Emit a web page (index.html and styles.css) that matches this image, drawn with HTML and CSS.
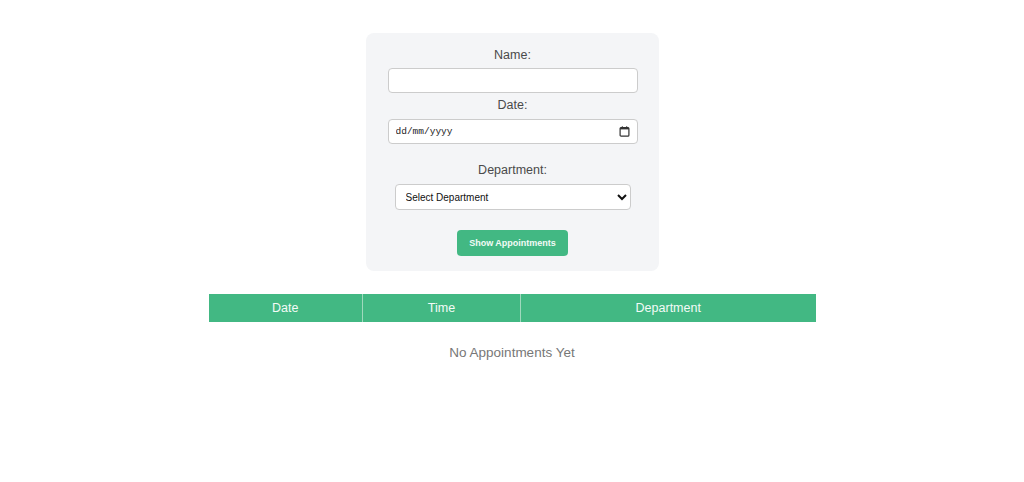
FILE: index.html
```html
<!DOCTYPE html>
<html lang="en-GB">
<head>
  <meta charset="UTF-8" />
  <meta name="viewport" content="width=device-width, initial-scale=1" />
  <title>Appointments</title>
  <link rel="stylesheet" href="styles.css">
</head>
<body>
  <div class="form-box">
    <label for="name" class="label-name">Name:</label>
    <input type="text" id="name" class="field" />

    <label for="date" class="label-date">Date:</label>
    <div class="field date-wrap">
      <input type="text" id="date" class="date-input" placeholder="dd/mm/yyyy" />
      <svg class="cal-icon" width="11" height="11" viewBox="0 0 11 11" aria-hidden="true">
        <rect x="1.1" y="1.6" width="8.8" height="8.6" rx="1" fill="none" stroke="#333" stroke-width="1.2"/>
        <rect x="1.1" y="1.6" width="8.8" height="1.8" fill="#333"/>
        <rect x="2.8" y="0.3" width="1.1" height="1.6" fill="#333"/>
        <rect x="7.1" y="0.3" width="1.1" height="1.6" fill="#333"/>
      </svg>
    </div>

    <label for="dept" class="label-dept">Department:</label>
    <select id="dept" class="dept-select">
      <option>Select Department</option>
      <option>Cardiology</option>
      <option>Neurology</option>
      <option>Pediatrics</option>
    </select>

    <button class="btn-show">Show Appointments</button>
  </div>

  <table class="appointments">
    <colgroup>
      <col class="col-date" />
      <col class="col-time" />
      <col class="col-dept" />
    </colgroup>
    <thead>
      <tr>
        <th>Date</th>
        <th>Time</th>
        <th>Department</th>
      </tr>
    </thead>
    <tbody id="appointmentList"></tbody>
  </table>

  <p class="empty">No Appointments Yet</p>
</body>
</html>
```

FILE: styles.css
```css
/* Base styles */
body {
  font-family: "Liberation Sans", Arial, sans-serif;
  background-color: #fff;
  color: #444;
  margin: 0;
  padding-top: 33px;
}

/* Form card */
.form-box {
  width: 293px;
  margin: 0 auto;
  box-sizing: border-box;
  padding: 14px 21px 15px 22px;
  background-color: #f4f5f7;
  border-radius: 8px;
  display: flex;
  flex-direction: column;
  align-items: center;
}

.form-box label {
  font-size: 12.5px;
  line-height: 16px;
  color: #4a4a4a;
}

.label-name {
  margin-bottom: 5px;
}

.label-date {
  margin-top: 4px;
  margin-bottom: 6px;
}

.label-dept {
  margin-top: 18px;
  margin-bottom: 6px;
}

.field {
  width: 250px;
  height: 25px;
  box-sizing: border-box;
  margin: 0;
  padding: 2px 7px;
  border: 1px solid #ccc;
  border-radius: 4px;
  background-color: #fff;
}

/* Date field */
.date-wrap {
  display: flex;
  align-items: center;
  padding: 0 7px 0 7px;
}

.date-input {
  flex: 1;
  min-width: 0;
  border: none;
  outline: none;
  padding: 0;
  background: transparent;
  font-family: "Liberation Mono", "DejaVu Sans Mono", monospace;
  font-size: 9.5px;
  color: #222;
}

.date-input::placeholder {
  color: #222;
}

.cal-icon {
  display: block;
  flex: none;
}

.dept-select {
  width: 236px;
  height: 26px;
  box-sizing: border-box;
  padding: 0 4px 0 6px;
  border: 1px solid #ccc;
  border-radius: 4px;
  background-color: #fff;
  font-family: "Liberation Sans", Arial, sans-serif;
  font-size: 10px;
  color: #111;
}

.btn-show {
  margin-top: 20px;
  width: 111px;
  height: 26px;
  padding: 0;
  border: none;
  border-radius: 4px;
  background-color: #42b883;
  color: #f2fbf6;
  font-family: "Liberation Sans", Arial, sans-serif;
  font-size: 9px;
  font-weight: bold;
  cursor: pointer;
}

/* Table */
.appointments {
  width: 607px;
  margin: 23px auto 0;
  border-collapse: collapse;
  table-layout: fixed;
}

.col-date { width: 154px; }
.col-time { width: 158px; }
.col-dept { width: 295px; }

.appointments th {
  height: 28px;
  padding: 0;
  background-color: #42b883;
  color: #f4fbf7;
  font-size: 12.5px;
  font-weight: normal;
  border-left: 1px solid #9fd9bd;
}

.appointments th:first-child {
  border-left: none;
}

.empty {
  margin: 23px 0 0;
  text-align: center;
  font-size: 13.5px;
  color: #777;
}
```
